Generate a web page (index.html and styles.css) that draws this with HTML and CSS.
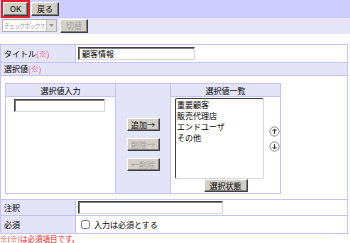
FILE: index.html
```html
<!DOCTYPE html>
<html lang="ja">
<head>
  <meta charset="UTF-8">
  <title>項目編集</title>
  <link rel="stylesheet" href="styles.css">
</head>
<body>
  <div class="toolbar">
    <button class="btn btn-ok">OK</button>
    <button class="btn">戻る</button>
  </div>
  <div class="subbar">
    <div class="type-select">
      <span class="type-text">チェックボックス</span>
      <span class="type-arrow"><svg width="7" height="7" viewBox="0 0 7 7"><path d="M1 2h5L3.5 5z" fill="#999"/></svg></span>
    </div>
    <button class="btn" disabled>切替</button>
  </div>

  <table class="form">
    <tr>
      <th class="label">タイトル<span class="req">(※)</span></th>
      <td><input class="text title-input" type="text" value="顧客情報"></td>
    </tr>
    <tr>
      <th class="label" colspan="2">選択値<span class="req">(※)</span></th>
    </tr>
    <tr>
      <td class="choices" colspan="2">
        <table class="inner">
          <tr>
            <th class="head">選択値入力</th>
            <td class="mid" rowspan="2">
              <div class="mid-buttons">
                <button class="btn btn-small">追加→</button>
                <button class="btn btn-small" disabled>削除→</button>
                <button class="btn btn-small" disabled>←削除</button>
              </div>
            </td>
            <th class="head">選択値一覧</th>
          </tr>
          <tr>
            <td class="cell-input"><input class="text value-input" type="text"></td>
            <td class="cell-list">
              <div class="list-wrap">
                <select class="value-list" multiple size="8">
                  <option>重要顧客</option>
                  <option>販売代理店</option>
                  <option>エンドユーザ</option>
                  <option>その他</option>
                </select>
                <div class="arrows">
                  <svg width="11" height="11" viewBox="0 0 11 11"><circle cx="5.5" cy="5.5" r="4.6" fill="#fff" stroke="#888"/><path d="M5.5 8V3M3.5 5l2-2 2 2" fill="none" stroke="#333"/></svg>
                  <svg width="11" height="11" viewBox="0 0 11 11"><circle cx="5.5" cy="5.5" r="4.6" fill="#fff" stroke="#888"/><path d="M5.5 3v5M3.5 6l2 2 2-2" fill="none" stroke="#333"/></svg>
                </div>
              </div>
              <button class="btn btn-state">選択状態</button>
            </td>
          </tr>
        </table>
      </td>
    </tr>
    <tr>
      <th class="label">注釈</th>
      <td><input class="text note-input" type="text"></td>
    </tr>
    <tr>
      <th class="label">必須</th>
      <td><label class="check"><input type="checkbox"> 入力は必須とする</label></td>
    </tr>
  </table>
  <p class="note">※(※)は必須項目です。</p>
</body>
</html>
```

FILE: styles.css
```css
body {
  margin: 0;
  font-family: "Noto Sans CJK JP", "Liberation Sans", sans-serif;
  font-size: 8px;
  line-height: 11px;
  color: #000;
  width: 350px;
}
.toolbar {
  background: #ccccff;
  height: 18px;
  padding: 2px 0 0 3px;
  box-sizing: border-box;
  display: flex;
  gap: 3px;
}
.subbar {
  background: #e6e6f8;
  height: 16px;
  padding: 1px 0 0 2px;
  box-sizing: border-box;
  display: flex;
  gap: 3px;
  align-items: flex-start;
}
.btn {
  font-family: inherit;
  font-size: 8px;
  line-height: 1;
  height: 14px;
  padding: 0 5px;
  background: #d4d0c8;
  color: #000;
  border: 1px solid;
  border-color: #fff #404040 #404040 #fff;
  box-shadow: inset -1px -1px 0 #808080;
}
.btn:disabled {
  color: #a0a0a0;
}
.btn-ok {
  outline: 2px solid #e8202a;
  padding: 0 6px;
}
.type-select {
  display: flex;
  align-items: center;
  height: 13px;
  width: 55px;
  box-sizing: border-box;
  border: 1px solid #b0b0b0;
  background: #fff;
}
.type-text {
  flex: 1;
  font-size: 6px;
  line-height: 11px;
  letter-spacing: -0.9px;
  color: #999;
  white-space: nowrap;
  padding-left: 1px;
}
.type-arrow {
  display: flex;
  align-items: center;
  justify-content: center;
  width: 9px;
  height: 11px;
  background: #e0e0e0;
  border-left: 1px solid #c0c0c0;
}
.form {
  margin-top: 10px;
  width: 348px;
  border-collapse: collapse;
  border: 1px solid #c4c4f4;
}
.form > tbody > tr > th,
.form > tbody > tr > td {
  border: 1px solid #c4c4f4;
  padding: 1px 2px;
  text-align: left;
  font-weight: normal;
}
.form > tbody > tr > th.label {
  background: #e4e4f8;
  width: 68px;
  padding: 1px 3px;
  line-height: 10px;
}
.req {
  color: #f04060;
}
.text {
  font-family: inherit;
  font-size: 8px;
  height: 13px;
  box-sizing: border-box;
  padding: 0 3px;
  margin: 0;
  border: 1px solid;
  border-color: #404040 #d8d8d8 #d8d8d8 #404040;
  box-shadow: inset 1px 1px 0 #808080;
  vertical-align: middle;
}
.title-input {
  width: 117px;
  margin: 1px 0;
}
.note-input {
  width: 145px;
}
.form > tbody > tr > td.choices {
  padding: 7px 4px 5px 4px;
}
.inner {
  border-collapse: collapse;
  width: 276px;
}
.inner th,
.inner td {
  border: 1px solid #c4c4f4;
  font-weight: normal;
  padding: 0;
}
.head {
  background: #e4e4f8;
  height: 12px;
  text-align: center;
}
.inner th.head:first-child {
  width: 109px;
}
.mid {
  background: #e4e4f8;
  width: 54px;
  vertical-align: top;
}
.mid-buttons {
  display: flex;
  flex-direction: column;
  align-items: center;
  gap: 7px;
  padding-top: 34px;
}
.btn-small {
  height: 13px;
  width: 33px;
  padding: 0;
}
.cell-input {
  vertical-align: top;
  height: 96px;
}
.value-input {
  margin: 2px 0 0 8px;
  width: 91px;
}
.cell-list {
  vertical-align: top;
  text-align: center;
}
.list-wrap {
  display: flex;
  align-items: center;
  gap: 5px;
  padding: 1px 0 0 4px;
}
.value-list {
  font-family: inherit;
  font-size: 8px;
  width: 89px;
  height: 81px;
  padding: 0;
  border: 1px solid;
  border-color: #404040 #d8d8d8 #d8d8d8 #404040;
  overflow: hidden;
}
.value-list option {
  padding: 0 1px;
  line-height: 9px;
}
.arrows {
  display: flex;
  flex-direction: column;
  gap: 4px;
}
.btn-state {
  margin: 0 0 1px 0;
  height: 13px;
  width: 44px;
  padding: 0;
}
.check {
  display: flex;
  align-items: center;
  gap: 4px;
  padding: 2px 0 2px 3px;
}
.check input {
  margin: 0;
  width: 9px;
  height: 9px;
}
.note {
  margin: 0;
  color: #f02020;
  font-size: 7.5px;
  line-height: 10px;
}
```
